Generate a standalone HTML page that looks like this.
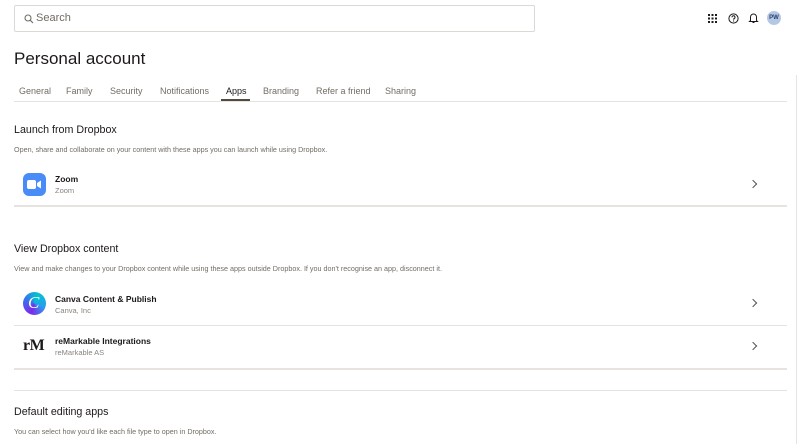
<!DOCTYPE html>
<html><head><style>
*{margin:0;padding:0;box-sizing:border-box}
body{width:800px;height:444px;overflow:hidden;background:#fff;font-family:"Liberation Sans",sans-serif;color:#1e1919;position:relative}
.a{position:absolute}
.search{left:14px;top:5px;width:521px;height:27px;border:1px solid #dcd9d5;border-radius:2px}
.search span{position:absolute;left:21px;top:6px;font-size:11px;color:#736c64}
.h1{left:14px;top:49px;font-size:17px;color:#1e1919}
.tab{top:86px;font-size:9px;color:#736c64}
.line{height:1px;background:#e6e3e0}
.h2{font-size:10.7px;left:14px}
.desc{font-size:7.2px;color:#736c64;left:14px}
.nm{font-size:8.5px;font-weight:bold;left:55px}
.sub{font-size:7.5px;color:#8a837c;left:55px}
.chev{left:750px;width:6px;height:6px;border-top:1.2px solid #555;border-right:1.2px solid #555;transform:rotate(45deg)}
</style></head><body>
<div class="a search"><svg class="a" style="left:9px;top:8px" width="10" height="10" viewBox="0 0 10 10"><circle cx="4" cy="4" r="3" fill="none" stroke="#736c64" stroke-width="1.1"/><path d="M6.2 6.2L9 9" stroke="#736c64" stroke-width="1.1"/></svg><span>Search</span></div>
<svg class="a" style="left:708px;top:14px" width="9" height="9" viewBox="0 0 9 9" fill="#1e1919"><rect x="0" y="0" width="2" height="2"/><rect x="3.5" y="0" width="2" height="2"/><rect x="7" y="0" width="2" height="2"/><rect x="0" y="3.5" width="2" height="2"/><rect x="3.5" y="3.5" width="2" height="2"/><rect x="7" y="3.5" width="2" height="2"/><rect x="0" y="7" width="2" height="2"/><rect x="3.5" y="7" width="2" height="2"/><rect x="7" y="7" width="2" height="2"/></svg>
<svg class="a" style="left:728px;top:13px" width="11" height="11" viewBox="0 0 11 11"><circle cx="5.5" cy="5.5" r="4.6" fill="none" stroke="#1e1919" stroke-width="1"/><path d="M4 4.3a1.5 1.5 0 1 1 1.8 1.4v1" fill="none" stroke="#1e1919" stroke-width="1"/><circle cx="5.6" cy="8" r=".6" fill="#1e1919"/></svg>
<svg class="a" style="left:748px;top:12px" width="11" height="12" viewBox="0 0 11 12"><path d="M2.5 8.5V5a3 3 0 0 1 6 0v3.5l1 1h-8z" fill="none" stroke="#1e1919" stroke-width="1"/><path d="M4.5 10.5h2" stroke="#1e1919"/></svg>
<div class="a" style="left:767px;top:11px;width:14px;height:14px;border-radius:50%;background:#b4c8e6;font-size:6px;font-weight:bold;color:#2a3f66;text-align:center;line-height:14px">PW</div>
<div class="a h1">Personal account</div>
<div class="a tab" style="left:19px">General</div>
<div class="a tab" style="left:66px">Family</div>
<div class="a tab" style="left:110px">Security</div>
<div class="a tab" style="left:160px">Notifications</div>
<div class="a tab" style="left:226px;color:#1e1919">Apps</div>
<div class="a tab" style="left:263px">Branding</div>
<div class="a tab" style="left:316px">Refer a friend</div>
<div class="a tab" style="left:385px">Sharing</div>
<div class="a line" style="left:14px;top:101px;width:773px"></div>
<div class="a" style="left:221px;top:99px;width:29px;height:2px;background:#52493f"></div>
<div class="a" style="left:796px;top:75px;width:1px;height:369px;background:#e6e3e0"></div>
<div class="a h2" style="top:124px">Launch from Dropbox</div>
<div class="a desc" style="top:145px">Open, share and collaborate on your content with these apps you can launch while using Dropbox.</div>
<div class="a" style="left:23px;top:173px;width:23px;height:23px;border-radius:6px;background:#4a8cf7"></div>
<svg class="a" style="left:27px;top:179px" width="15" height="11" viewBox="0 0 15 11"><rect x="0" y="1" width="9" height="9" rx="2" fill="#fff"/><path d="M10 4l4-2.5v8L10 7z" fill="#fff"/></svg>
<div class="a nm" style="top:174px">Zoom</div>
<div class="a sub" style="top:186px">Zoom</div>
<div class="a chev" style="top:181px"></div>
<div class="a line" style="left:14px;top:205px;width:773px;height:2px"></div>
<div class="a h2" style="top:243px">View Dropbox content</div>
<div class="a desc" style="top:264px">View and make changes to your Dropbox content while using these apps outside Dropbox. If you don't recognise an app, disconnect it.</div>
<div class="a" style="left:23px;top:292px;width:23px;height:23px;border-radius:50%;background:conic-gradient(from 200deg,#7d2ae8,#3a6ff0,#00c4cc,#2a9cf0,#7d2ae8)"></div>
<div class="a" style="left:28px;top:293px;font-family:'Liberation Serif',serif;font-style:italic;font-size:17px;color:#fff">C</div>
<div class="a nm" style="top:294px">Canva Content &amp; Publish</div>
<div class="a sub" style="top:306px">Canva, Inc</div>
<div class="a chev" style="top:300px"></div>
<div class="a line" style="left:14px;top:325px;width:773px"></div>
<div class="a" style="left:23px;top:337px;font-family:'Liberation Serif',serif;font-weight:bold;font-size:16px;letter-spacing:-0.5px">rM</div>
<div class="a nm" style="top:336px">reMarkable Integrations</div>
<div class="a sub" style="top:348px">reMarkable AS</div>
<div class="a chev" style="top:343px"></div>
<div class="a line" style="left:14px;top:368px;width:773px;height:2px"></div>
<div class="a line" style="left:14px;top:390px;width:773px"></div>
<div class="a h2" style="top:406px">Default editing apps</div>
<div class="a desc" style="top:427px">You can select how you'd like each file type to open in Dropbox.</div>
</body></html>
